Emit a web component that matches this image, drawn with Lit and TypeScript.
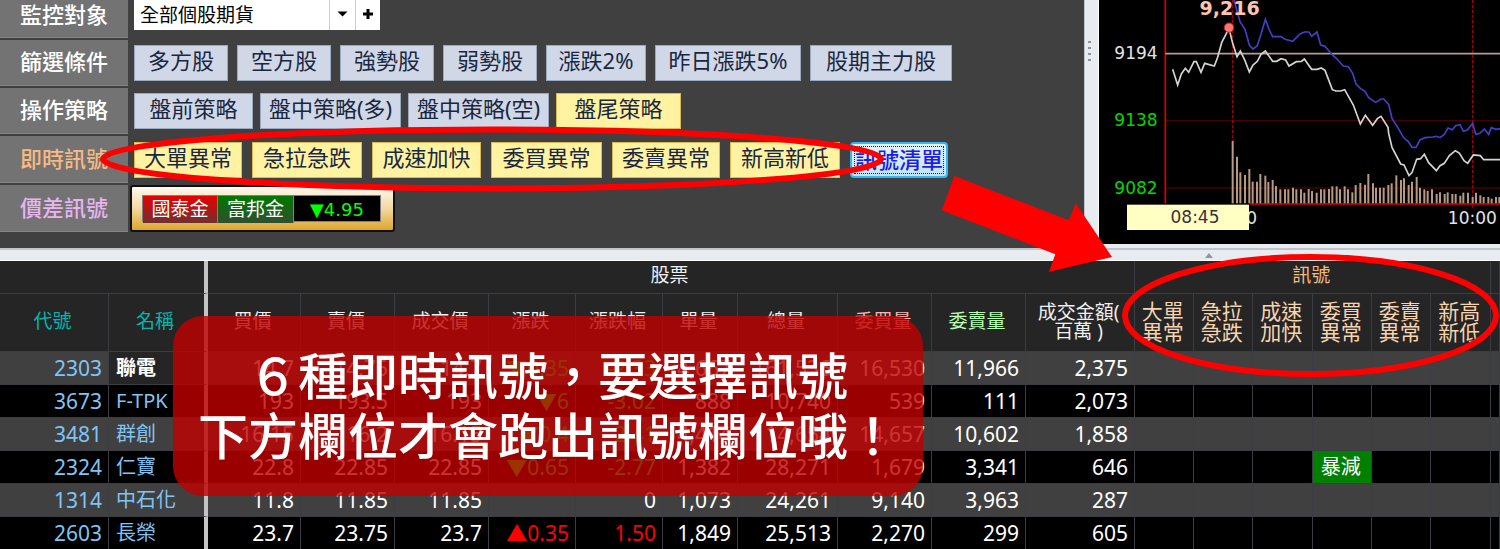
import { LitElement, html, css, svg, nothing } from "lit";
import { customElement } from "lit/decorators.js";
import { classMap } from "lit/directives/class-map.js";

interface Action {
  label: string;
  width: number;
}

const filters: Action[] = [
  { label: "多方股", width: 94 },
  { label: "空方股", width: 94 },
  { label: "強勢股", width: 94 },
  { label: "弱勢股", width: 94 },
  { label: "漲跌2%", width: 100 },
  { label: "昨日漲跌5%", width: 146 },
  { label: "股期主力股", width: 142 },
];

const strategies: Action[] = [
  { label: "盤前策略", width: 119 },
  { label: "盤中策略(多)", width: 141 },
  { label: "盤中策略(空)", width: 141 },
];

const signals: Action[] = [
  { label: "大單異常", width: 108 },
  { label: "急拉急跌", width: 110 },
  { label: "成速加快", width: 109 },
  { label: "委買異常", width: 111 },
  { label: "委賣異常", width: 108 },
  { label: "新高新低", width: 110 },
];

const columnWidths = [109, 99, 93, 94, 94, 87, 87, 75, 100, 94, 94, 109, 59, 59, 60, 59, 59, 60];

interface Stock {
  code: string;
  name: string;
  values: string[];
  trend: "down" | "up" | "flat";
  signal?: number;
  active?: boolean;
}

const stocks: Stock[] = [
  { code: "2303", name: "聯電", trend: "down", active: true,
    values: ["14.7", "14.75", "14.7", "▼0.35", "-2.33", "4,667", "161,536", "16,530", "11,966", "2,375"] },
  { code: "3673", name: "F-TPK", trend: "down",
    values: ["193", "193.5", "193", "▼6", "-3.02", "888", "10,740", "539", "111", "2,073"] },
  { code: "3481", name: "群創", trend: "down",
    values: ["16.15", "16.2", "16.15", "▼0.4", "-2.41", "4,414", "114,654", "14,657", "10,602", "1,858"] },
  { code: "2324", name: "仁寶", trend: "down", signal: 3,
    values: ["22.8", "22.85", "22.85", "▼0.65", "-2.77", "1,382", "28,271", "1,679", "3,341", "646"] },
  { code: "1314", name: "中石化", trend: "flat",
    values: ["11.8", "11.85", "11.85", "", "0", "1,073", "24,261", "9,140", "3,963", "287"] },
  { code: "2603", name: "長榮", trend: "up",
    values: ["23.7", "23.75", "23.7", "▲0.35", "1.50", "1,849", "25,513", "2,270", "299", "605"] },
];

const volume: [number, number][] = [
  [458, 48], [471, 95], [481, 142], [495, 150], [508, 132], [518, 170], [531, 170], [541, 147],
  [556, 152], [565, 171], [578, 165], [588, 183], [601, 193], [615, 193], [625, 193], [639, 188],
  [649, 193], [663, 193], [673, 203], [686, 192], [696, 198], [710, 203], [723, 193], [733, 193],
  [747, 192], [757, 184], [770, 184], [780, 193], [794, 184], [804, 193], [817, 202], [827, 180],
  [841, 174], [855, 179], [865, 147], [879, 175], [888, 188], [900, 188], [911, 188], [925, 180],
  [935, 175], [949, 151], [963, 165], [972, 160], [986, 180], [996, 170], [1010, 156], [1020, 188],
  [1033, 193], [1043, 198], [1056, 193], [1070, 207], [1080, 202], [1094, 207], [1103, 202],
  [1117, 207], [1127, 207], [1141, 212], [1150, 203], [1164, 203], [1178, 216], [1188, 203],
  [1201, 211], [1211, 216], [1225, 216], [1235, 221], [1248, 216], [1258, 216],
];

const priceLine =
  "278,208 293,255 304,222 316,205 326,217 342,185 349,185 363,217 374,190 403,198 413,172 425,128 447,85 458,130 471,170 481,153 495,182 508,216 519,195 532,184 543,163 556,153 578,184 590,184 603,176 617,180 627,198 649,185 664,184 673,177 695,208 711,208 724,204 735,211 757,269 768,273 782,273 794,269 820,315 841,372 856,346 878,376 892,356 903,349 924,382 926,400 936,442 962,492 972,495 987,527 996,518 1010,478 1022,476 1033,463 1046,488 1069,512 1080,497 1093,490 1108,467 1126,452 1138,459 1152,482 1163,490 1180,465 1201,467 1211,479 1260,479";

const indexLine =
  "462,0 480,65 495,88 508,135 519,147 532,137 543,103 556,58 568,90 578,110 603,110 615,118 638,124 660,102 673,96 687,96 695,109 711,96 722,135 735,139 757,165 768,174 790,198 805,200 818,220 828,252 841,265 855,274 866,293 887,307 903,297 911,297 926,313 936,355 955,385 970,412 985,425 996,442 1008,442 1020,420 1035,413 1058,411 1070,409 1080,413 1093,403 1104,384 1117,389 1127,377 1140,374 1150,394 1162,390 1178,370 1187,403 1200,400 1213,387 1226,403 1234,383 1248,388 1260,386";

@customElement("index-chart")
export class IndexChart extends LitElement {
  static styles = css`
    :host {
      display: block;
      background: #000;
      overflow: hidden;
    }
    svg {
      display: block;
      width: 401px;
      height: 244px;
    }
    text {
      font-family: "DejaVu Sans", sans-serif;
      font-size: 51px;
    }
    .peak {
      font-weight: bold;
      fill: #ffc4ae;
      font-size: 57px;
    }
    .base {
      fill: #e4e4e4;
    }
    .low {
      fill: #00d800;
    }
    .tip {
      fill: #3a3038;
    }
  `;

  render() {
    return html`
      <svg viewBox="57 0 1203 732" role="img" aria-label="9,216">
        <path d="M258 362H1260M258 564H1260" stroke="#4a0000" stroke-width="4" />
        <path d="M458 0V610M1178 0V625" stroke="#a00000" stroke-width="4" stroke-dasharray="10 5" />
        <path d="M256 0V610M510 612H1260" stroke="#e00000" stroke-width="5" fill="none" />
        <path d="M256 161H1260" stroke="#b49c9c" stroke-width="5" />
        ${volume.map(([x, top]) => svg`<path d="M${x} ${top + 375}V610" stroke="#b89880" stroke-width="6" />`)}
        <polyline points=${indexLine} fill="none" stroke="#4040c8" stroke-width="5" />
        <polyline points=${priceLine} fill="none" stroke="#d4d4d4" stroke-width="5" />
        <circle cx="447" cy="83" r="14" fill="#ff7474" stroke="#d02020" stroke-width="3" />
        <text class="peak" x="449" y="46" text-anchor="middle">9,216</text>
        <text class="base" x="103" y="178">9194</text>
        <text class="low" x="103" y="379">9138</text>
        <text class="low" x="103" y="581">9082</text>
        <text class="base" x="458" y="673" text-anchor="middle">09:00</text>
        <text class="base" x="1177" y="673" text-anchor="middle">10:00</text>
        <rect x="141" y="614" width="366" height="76" fill="#ffffc4" />
        <text class="tip" x="345" y="669" text-anchor="middle">08:45</text>
      </svg>
    `;
  }
}

@customElement("signal-panel")
export class SignalPanel extends LitElement {
  static styles = css`
    :host {
      display: grid;
      grid-template-columns: 128px 1fr;
      grid-template-rows: 38px 46px 46px 47px 47px;
      row-gap: 2px;
      background: #404040;
      overflow: hidden;
    }
    .label {
      display: flex;
      align-items: center;
      box-sizing: border-box;
      padding: 0 0 3px 20px;
      background: #737373;
      border-bottom: 1px solid #858585;
      color: #fff;
      font-size: 22px;
      font-weight: 500;
      line-height: 22px;
      white-space: nowrap;
    }
    .label.first {
      padding-bottom: 10px;
    }
    .orange {
      color: #f5b982;
    }
    .violet {
      color: #e8b4f2;
    }
    .row {
      display: flex;
      align-items: center;
      padding-left: 6px;
      gap: 9px;
    }
    .top {
      align-items: flex-start;
      gap: 0;
    }
    .tight {
      gap: 7px;
    }
    .wide {
      gap: 10px;
    }
    .flush {
      padding-left: 2px;
    }
    button {
      font-family: inherit;
      white-space: nowrap;
      cursor: pointer;
    }
    .action {
      flex: none;
      box-sizing: border-box;
      height: 36px;
      padding: 0 0 6px;
      border: 1px solid #9aa9bf;
      background: #d0d8e8;
      color: #1a2740;
      font-size: 22px;
      line-height: 28px;
    }
    .on {
      background: #fff2a0;
      border-color: #e0b850;
    }
    .list {
      display: flex;
      flex: none;
      box-sizing: border-box;
      width: 98px;
      height: 36px;
      padding: 2px;
      border: 2px solid #38b4f4;
      border-radius: 4px;
      background: linear-gradient(#e4f3fc, #bfe4f8);
    }
    .focus {
      flex: 1;
      border: 1px dotted #1010c0;
      color: #1c1ce8;
      font-size: 22px;
      font-weight: 500;
      line-height: 25px;
      text-align: center;
    }
    .picker {
      position: relative;
      display: flex;
      height: 30px;
      background: #fff;
    }
    select {
      appearance: none;
      width: 221px;
      border: 0;
      border-radius: 0;
      padding: 0 26px 0 6px;
      background: #fff;
      color: #000;
      font-family: inherit;
      font-size: 19px;
      line-height: 30px;
    }
    .caret {
      position: absolute;
      right: 25px;
      top: 0;
      width: 26px;
      height: 30px;
      border-left: 1px solid #ccc;
      box-sizing: border-box;
      pointer-events: none;
    }
    .add {
      width: 25px;
      padding: 0;
      border: 0;
      border-left: 1px solid #ccc;
      background: #fff;
    }
    svg {
      display: block;
    }
    .spread {
      display: flex;
      box-sizing: border-box;
      height: 47px;
      padding: 8px 12px 8px 10px;
      border: 2px solid #101010;
      border-radius: 3px;
      background: linear-gradient(#fff8ee, #f3d9a0 50%, #dda52c);
    }
    .quote {
      display: grid;
      grid-template-columns: 75px 76px 86px;
      box-sizing: border-box;
      border: 1px solid #808080;
      color: #fff;
      font-size: 19px;
      line-height: 27px;
      text-align: center;
      background: #000;
    }
    .sell {
      background: linear-gradient(#e80000, #703030);
      border-right: 1px solid #808080;
    }
    .buy {
      background: linear-gradient(#007800, #305030);
      border-right: 1px solid #808080;
    }
    .diff {
      font-family: "DejaVu Sans", sans-serif;
      font-size: 18px;
      color: #00ff00;
    }
  `;

  private actions(items: Action[], on = false) {
    return items.map(
      (item) => html`<button class=${classMap({ action: true, on })} style="width:${item.width}px">${item.label}</button>`
    );
  }

  render() {
    return html`
      <label class="label first" for="watch">監控對象</label>
      <div class="row top">
        <div class="picker">
          <select id="watch">
            <option>全部個股期貨</option>
          </select>
          <span class="caret">
            <svg width="25" height="30" viewBox="0 0 25 30"><path d="M7.500 11.500h10l-5 5z" fill="#000" /></svg>
          </span>
          <button class="add" aria-label="+">
            <svg width="24" height="30" viewBox="0 0 24 30"><path d="M12 9v10M7 14h10" stroke="#000" stroke-width="3" /></svg>
          </button>
        </div>
      </div>
      <div class="label">篩選條件</div>
      <div class="row">${this.actions(filters)}</div>
      <div class="label">操作策略</div>
      <div class="row tight">
        ${this.actions(strategies)} ${this.actions([{ label: "盤尾策略", width: 125 }], true)}
      </div>
      <div class="label orange">即時訊號</div>
      <div class="row wide">
        ${this.actions(signals, true)}
        <button class="list"><span class="focus">訊號清單</span></button>
      </div>
      <div class="label violet">價差訊號</div>
      <div class="row flush">
        <div class="spread">
          <div class="quote">
            <span class="sell">國泰金</span>
            <span class="buy">富邦金</span>
            <span class="diff">▼4.95</span>
          </div>
        </div>
      </div>
    `;
  }
}

@customElement("stock-table")
export class StockTable extends LitElement {
  static styles = css`
    :host {
      display: block;
      background: #000;
    }
    table {
      width: 100%;
      table-layout: fixed;
      border-collapse: separate;
      border-spacing: 0;
    }
    th,
    td {
      box-sizing: border-box;
      padding: 0;
      border-right: 1px solid #3c3c44;
      border-bottom: 1px solid #3c3c44;
      white-space: nowrap;
      vertical-align: middle;
    }
    th {
      padding: 0 3px 0 0;
      background: #252525;
      color: #f0f0f0;
      font-size: 19px;
      font-weight: 400;
      line-height: 19px;
      text-align: center;
    }
    .groups th {
      height: 33px;
      padding-bottom: 3px;
    }
    .heads th {
      height: 58px;
      padding-bottom: 2px;
    }
    .pin {
      border-right: 4px solid #c4c4c4;
    }
    .teal {
      color: #00b8b0;
    }
    .pink {
      color: #ffb4b4;
    }
    .green {
      color: #b4ffb4;
    }
    .amber {
      color: #f5b982;
    }
    .heads .sig {
      color: #f7d4ae;
      font-size: 21px;
      line-height: 21px;
    }
    td {
      height: 33px;
      padding: 0 6px 1px;
      color: #fff;
      font-size: 21px;
      line-height: 28px;
      text-align: right;
      overflow: hidden;
    }
    .odd td {
      background: #404040;
    }
    .key {
      color: #80c4f4;
    }
    .name {
      text-align: left;
      padding-left: 7px;
      font-size: 20px;
    }
    .odd .active {
      background: #252525;
      color: #fff;
      font-weight: 700;
    }
    .down {
      color: #00ff00;
    }
    .up {
      color: #ff0000;
    }
    td.hit {
      padding: 0 3px 1px 0;
      background: #008000;
      font-size: 20px;
      text-align: center;
    }
  `;

  render() {
    return html`
      <table>
        <colgroup>
          ${columnWidths.map((w) => html`<col style="width:${w}px" />`)}
          <col />
        </colgroup>
        <thead>
          <tr class="groups">
            <th class="pin" colspan="2"></th>
            <th colspan="10">股票</th>
            <th class="amber" colspan="6">訊號</th>
            <th></th>
          </tr>
          <tr class="heads">
            <th class="teal">代號</th>
            <th class="teal pin">名稱</th>
            <th>買價</th>
            <th>賣價</th>
            <th>成交價</th>
            <th>漲跌</th>
            <th>漲跌幅</th>
            <th>單量</th>
            <th>總量</th>
            <th class="pink">委買量</th>
            <th class="green">委賣量</th>
            <th>成交金額(<br />百萬 )</th>
            ${signals.map((s) => html`<th class="sig">${s.label.slice(0, 2)}<br />${s.label.slice(2)}</th>`)}
            <th></th>
          </tr>
        </thead>
        <tbody>
          ${stocks.map(
            (s, row) => html`<tr class=${row % 2 === 0 ? "odd" : "even"}>
              <td class="key">${s.code}</td>
              <td class=${classMap({ key: true, name: true, pin: true, active: !!s.active })}>${s.name}</td>
              ${s.values.map(
                (v, i) => html`<td class=${i === 3 || i === 4 ? s.trend : ""}>${v}</td>`
              )}
              ${signals.map((_, i) => html`<td class=${s.signal === i ? "hit" : ""}>${s.signal === i ? "暴減" : nothing}</td>`)}
              <td></td>
            </tr>`
          )}
        </tbody>
      </table>
    `;
  }
}

@customElement("app-root")
export class AppRoot extends LitElement {
  static styles = css`
    :host {
      display: block;
      position: relative;
      height: 100vh;
      overflow: hidden;
      background: #000;
      font-family: "Noto Sans", "Noto Sans CJK TC", sans-serif;
    }
    .upper {
      display: grid;
      grid-template-columns: 1fr 15px 401px;
      height: 248px;
      background: #e8ecf0;
    }
    .gutter {
      display: flex;
      flex-direction: column;
      align-items: center;
      gap: 4px;
      padding: 41px 5px 0 0;
      border-left: 1px solid #c0c4cc;
      border-right: 1px solid #fff;
    }
    .dot {
      width: 3px;
      height: 2px;
      background: #8894a4;
    }
    .chart {
      height: 244px;
    }
    .splitter {
      display: flex;
      justify-content: flex-end;
      box-sizing: border-box;
      height: 13px;
      padding: 3px 287px 0 0;
      border-top: 2px solid #c0c4cc;
      border-bottom: 1px solid #fff;
      background: #e8ecf0;
    }
    .marks {
      position: absolute;
      left: 0;
      top: 0;
      pointer-events: none;
    }
    .banner {
      position: absolute;
      left: 173px;
      top: 316px;
      box-sizing: border-box;
      width: 750px;
      padding: 27px 0 33px;
      border-radius: 30px;
      background: rgba(192, 0, 0, 0.8);
      color: #fff;
      font-family: "Noto Sans CJK TC", sans-serif;
      font-size: 50px;
      font-weight: 500;
      line-height: 60px;
      text-align: center;
      white-space: nowrap;
    }
  `;

  render() {
    return html`
      <div class="upper">
        <signal-panel></signal-panel>
        <div class="gutter">
          <span class="dot"></span><span class="dot"></span><span class="dot"></span><span class="dot"></span>
        </div>
        <index-chart class="chart"></index-chart>
      </div>
      <div class="splitter">
        <svg width="8" height="5" viewBox="0 0 8 5"><path d="M0 5L4 0L8 5z" fill="#8c98a8" /></svg>
      </div>
      <stock-table></stock-table>
      <div class="banner" lang="zh-Hant">６種即時訊號，要選擇訊號<br />下方欄位才會跑出訊號欄位哦！</div>
      <svg class="marks" width="1500" height="549" viewBox="0 0 1500 549" aria-hidden="true">
        <ellipse cx="492" cy="159" rx="389" ry="29.500" fill="none" stroke="#f00" stroke-width="6" />
        <ellipse cx="1310.500" cy="315.500" rx="185.500" ry="58.500" fill="none" stroke="#f00" stroke-width="6" />
        <path d="M954.500 176L1068.700 220.300L1075.700 203.300L1112 257L1049 271.700L1055.300 254.300L941.700 210.300z" fill="#f00" />
      </svg>
    `;
  }
}
